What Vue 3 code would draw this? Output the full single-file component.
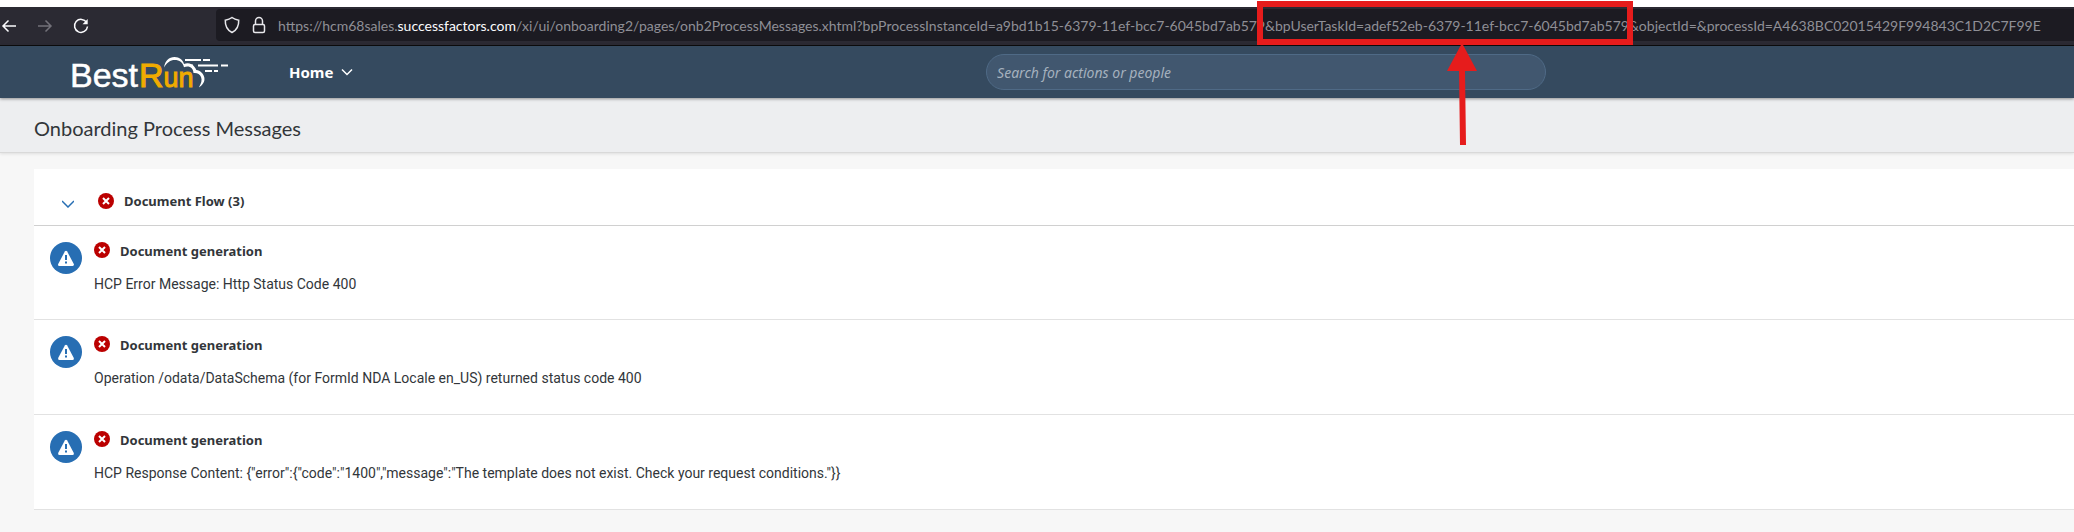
<script setup>
import { ref } from 'vue'

const open = ref(true)
const query = ref('')
const messages = [
  'HCP Error Message: Http Status Code 400',
  'Operation /odata/DataSchema (for FormId NDA Locale en_US) returned status code 400',
  'HCP Response Content: {"error":{"code":"1400","message":"The template does not exist. Check your request conditions."}}',
]
const urlPath =
  '/xi/ui/onboarding2/pages/onb2ProcessMessages.xhtml?bpProcessInstanceId=a9bd1b15-6379-11ef-bcc7-6045bd7ab579&bpUserTaskId=adef52eb-6379-11ef-bcc7-6045bd7ab579&objectId=&processId=A4638BC02015429F994843C1D2C7F99E'
</script>

<template>
  <div class="page">
    <div class="browser">
      <div class="nav">
        <button class="tool" aria-label="Back">
          <svg width="16" height="16" viewBox="0 0 16 16"><path d="M15 8H2M7.500 2.500 2 8l5.500 5.500" /></svg>
        </button>
        <button class="tool dim" aria-label="Forward" disabled>
          <svg width="16" height="16" viewBox="0 0 16 16"><path d="M1 8h13M8.500 2.500 14 8l-5.500 5.500" /></svg>
        </button>
        <button class="tool" aria-label="Reload">
          <svg width="16" height="16" viewBox="0 0 16 16">
            <path d="M13.600 4.500A6.500 6.500 0 1 0 14.500 8.500" />
            <path class="solid" d="M14.700 1v5.200H9.500z" />
          </svg>
        </button>
      </div>
      <div class="address">
        <svg class="glyph" width="16" height="18" viewBox="0 0 16 18">
          <path d="M8 1.500C6 3 3.500 3.800 1.300 4.200 1 10 3.200 14 8 16.500 12.800 14 15 10 14.700 4.200 12.500 3.800 10 3 8 1.500z" />
        </svg>
        <svg class="glyph" width="14" height="18" viewBox="0 0 14 18">
          <rect x="1.500" y="8.500" width="11" height="8" rx="1.500" />
          <path d="M3.500 8.500V5a3.500 3.500 0 0 1 7 0v3.500" />
        </svg>
        <div class="url" role="textbox" aria-label="Address" tabindex="0">https://hcm68sales.<span class="host">successfactors.com</span>{{ urlPath }}</div>
      </div>
    </div>

    <header class="shell">
      <svg class="logo" width="160" height="40" viewBox="0 0 160 40" role="img" aria-label="BestRun">
        <text x="-2" y="35" class="best">Best</text>
        <text x="67" y="35" class="run">R<tspan class="un">un</tspan></text>
        <path class="white" d="M92 15.500C93 9 97 5 102.500 5c5 0 8.500 3 9.500 7 4-1.500 8-.5 10.500 3 .8 1 1.500 2 1.800 3 4 .5 7.200 3.500 8 7.500.8 4-1.500 7.500-5.500 10 2.500-4 3.500-7.500 2.200-10.500-1.200-3-4-4.500-7.500-4 0-5-4.500-8-9.500-5.800-1.200-4.700-4.500-7.200-9.300-7.200-4.500 0-7.800 2.500-10.700 7.500z" />
        <path class="dash" d="M113 8h16M131 8h7M118 13.500h3M126 13.500h20M149 13.500h7M133 19h7M142 19h4" />
      </svg>
      <button class="home">
        Home
        <svg width="12" height="8" viewBox="0 0 12 8"><path d="M1 1.500l5 5 5-5" /></svg>
      </button>
      <input v-model="query" class="search" type="search" aria-label="Search" placeholder="Search for actions or people" />
    </header>

    <div class="title-bar"><h1>Onboarding Process Messages</h1></div>

    <main>
      <section class="panel">
        <div class="group">
          <button class="toggle" aria-label="Toggle Document Flow" :aria-expanded="open" @click="open = !open">
            <svg width="12" height="8" viewBox="0 0 12 8"><path d="M0 1l6 6 6-6" /></svg>
          </button>
          <svg class="error" width="16" height="16" viewBox="0 0 16 16"><circle cx="8" cy="8" r="8" /><path d="M5 5l6 6M11 5l-6 6" /></svg>
          <h2>Document Flow (3)</h2>
        </div>
        <ul v-if="open">
          <li v-for="m in messages" :key="m">
            <svg class="alert" width="32" height="32" viewBox="0 0 32 32">
              <circle cx="16" cy="16" r="16" />
              <path d="M14.800 9.600q1.200-1.600 2.400 0l6.600 12.400q.6 2-1.200 2H9.400q-1.800 0-1.200-2z" />
              <path class="mark" d="M15 13h2v5h-2zM15 19.500h2v2h-2z" />
            </svg>
            <div class="body">
              <div class="head">
                <svg class="error" width="16" height="16" viewBox="0 0 16 16"><circle cx="8" cy="8" r="8" /><path d="M5 5l6 6M11 5l-6 6" /></svg>
                <h3>Document generation</h3>
              </div>
              <p>{{ m }}</p>
            </div>
          </li>
        </ul>
      </section>
    </main>

    <svg class="callout" width="376" height="145" viewBox="0 0 376 145" aria-hidden="true">
      <rect x="3" y="4" width="370" height="38" />
      <path d="M205 43l15 28h-12l1 74h-6l-1-74h-12z" />
    </svg>
  </div>
</template>

<style>
body {
  margin: 0;
  background: #f7f7f7;
}
</style>

<style scoped>
.page {
  position: relative;
  overflow: hidden;
  min-height: 100vh;
  font-family: Roboto, "Noto Sans", sans-serif;
  font-size: 14px;
  line-height: 20px;
  color: #32363a;
}
button {
  padding: 0;
  border: 0;
  background: none;
  color: inherit;
}
svg {
  flex: none;
  display: block;
}
h1, h2, h3, p, ul {
  margin: 0;
  padding: 0;
}
.browser {
  display: flex;
  border-top: 7px solid #fff;
  border-bottom: 1px solid #0c0c0d;
  background: #2b2a33;
}
.nav {
  box-sizing: border-box;
  flex: none;
  width: 216px;
  padding-left: 1px;
  display: flex;
  align-items: center;
  gap: 20px;
  color: #fbfbfe;
}
.tool {
  display: flex;
}
.tool svg {
  fill: none;
  stroke: currentColor;
  stroke-width: 1.5;
}
.tool .solid {
  fill: currentColor;
  stroke: none;
}
.dim {
  color: #73727a;
}
.address {
  flex: 1;
  min-width: 0;
  height: 32px;
  margin: 2px 0 4px;
  padding-left: 8px;
  display: flex;
  align-items: center;
  gap: 12px;
  border-radius: 4px 0 0 4px;
  background: #1c1b22;
}
.glyph {
  fill: none;
  stroke: #e8e8ec;
  stroke-width: 1.5;
}
.url {
  flex: 1;
  padding-top: 2px;
  overflow: hidden;
  font-family: Lato, "Noto Sans", sans-serif;
  white-space: nowrap;
  color: #8f8f96;
}
.host {
  color: #fbfbfe;
}
.shell {
  position: relative;
  display: grid;
  grid-template-columns: 160px 10fr 560px 7fr;
  align-items: center;
  height: 52px;
  padding-left: 72px;
  background: #354a5f;
  box-shadow: 0 1px 3px rgba(0, 0, 0, 0.4);
}
.logo {
  overflow: visible;
}
.best, .run {
  font-family: "Liberation Sans", Arial, sans-serif;
  font-size: 34px;
  fill: #fff;
  stroke: #fff;
  stroke-width: 0.5;
}
.run {
  fill: #f0ab00;
  stroke: #f0ab00;
  stroke-width: 1;
}
.un {
  font-size: 27px;
}
.white {
  fill: #fff;
}
.dash {
  stroke: #fff;
  stroke-width: 2;
}
.home {
  justify-self: start;
  margin-left: 57px;
  display: flex;
  align-items: center;
  gap: 8px;
  font: 700 15px/20px "Noto Sans", sans-serif;
  color: #fff;
}
.home svg {
  fill: none;
  stroke: #fff;
  stroke-width: 1.5;
}
.search {
  box-sizing: border-box;
  width: 100%;
  height: 36px;
  padding: 0 10px;
  border: 1px solid #4f6a86;
  border-radius: 18px;
  background: #41576f;
  font: italic 14px/20px "Noto Sans", sans-serif;
  color: #fff;
}
.search::placeholder {
  color: #a5b1be;
  opacity: 1;
}
.title-bar {
  padding: 19px 34px 13px;
  border-bottom: 1px solid #d9d9d9;
  background: #edeef0;
  box-shadow: 0 1px 3px rgba(0, 0, 0, 0.1);
}
h1 {
  font: 400 20px/22px Lato, "Noto Sans", sans-serif;
}
main {
  padding: 16px 0 22px 34px;
}
.panel {
  background: #fff;
}
.group {
  display: flex;
  align-items: center;
  height: 48px;
  padding: 8px 28px 0;
  border-bottom: 1px solid #d0d0d0;
}
.toggle {
  margin: 6px 24px 0 0;
}
.toggle svg {
  fill: none;
  stroke: #276eb3;
  stroke-width: 1.5;
}
.error circle {
  fill: #bb0000;
}
.error path {
  stroke: #fff;
  stroke-width: 2;
}
h2, h3 {
  margin-left: 10px;
  font: 700 13px/18px "Noto Sans", sans-serif;
}
ul {
  list-style: none;
}
li {
  box-sizing: border-box;
  min-height: 95px;
  display: flex;
  gap: 12px;
  padding: 16px;
  border-bottom: 1px solid #e2e2e2;
}
li:first-child {
  min-height: 94px;
}
.alert circle, .mark {
  fill: #276eb3;
}
.alert path:not(.mark) {
  fill: #fff;
}
.head {
  display: flex;
}
.body p {
  margin-top: 14px;
}
.callout {
  position: absolute;
  top: 0;
  left: 1257px;
  fill: #e61c1c;
}
.callout rect {
  fill: none;
  stroke: #e61c1c;
  stroke-width: 6;
}
</style>
